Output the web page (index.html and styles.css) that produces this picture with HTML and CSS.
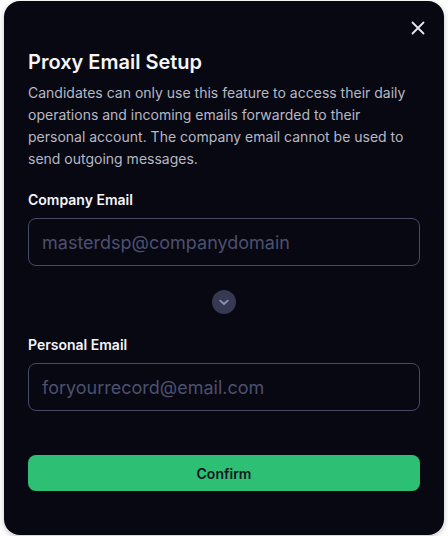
FILE: index.html
```html
<!DOCTYPE html>
<html lang="en">
<head>
  <meta charset="UTF-8" />
  <meta name="viewport" content="width=device-width, initial-scale=1.0"/>
  <title>Proxy Email Setup</title>
  <link rel="stylesheet" href="styles.css">
</head>
<body>
  <div class="modal">
    <button class="close-btn" aria-label="Close">
      <svg width="24" height="24" viewBox="0 0 24 24" fill="none" stroke="#e6e6ec" stroke-width="1.8" stroke-linecap="round">
        <path d="M6.5 6.5 L17.5 17.5 M17.5 6.5 L6.5 17.5"/>
      </svg>
    </button>

    <h1>Proxy Email Setup</h1>
    <p class="desc">Candidates can only use this feature to access their daily operations and incoming emails forwarded to their personal account. The company email cannot be used to send outgoing messages.</p>

    <div class="form-group">
      <label for="company-email">Company Email</label>
      <input type="text" id="company-email" placeholder="masterdsp@companydomain">
    </div>

    <div class="arrow-row">
      <span class="arrow">
        <svg width="24" height="24" viewBox="0 0 24 24" fill="none" stroke="#8e92bd" stroke-width="1.8" stroke-linecap="round" stroke-linejoin="round">
          <path d="M8.2 10.6 L12 14 L15.8 10.6"/>
        </svg>
      </span>
    </div>

    <div class="form-group">
      <label for="personal-email">Personal Email</label>
      <input type="text" id="personal-email" placeholder="foryourrecord@email.com">
    </div>

    <button class="confirm-btn">Confirm</button>
  </div>
</body>
</html>
```

FILE: styles.css
```css
body {
  font-family: 'Inter', 'Noto Sans', sans-serif;
  background-color: #fff;
  margin: 0;
  padding: 1px 4px;
}

.modal {
  position: relative;
  width: 440px;
  height: 534px;
  box-sizing: border-box;
  background-color: #070812;
  border-radius: 16px;
  padding: 47px 24px 44px;
  box-shadow: 0 2px 6px rgba(0, 0, 0, 0.22);
  display: flex;
  flex-direction: column;
}

.close-btn {
  position: absolute;
  top: 15px;
  right: 14px;
  width: 24px;
  height: 24px;
  padding: 0;
  border: none;
  background: none;
  cursor: pointer;
}

.close-btn svg {
  display: block;
}

h1 {
  margin: 0;
  font-size: 20px;
  line-height: 28px;
  font-weight: 600;
  color: #f5f5f7;
}

.desc {
  margin: 6px 0 0;
  font-size: 14px;
  line-height: 22px;
  color: #b7b8c3;
}

.form-group {
  display: flex;
  flex-direction: column;
  gap: 8px;
}

.desc + .form-group {
  margin-top: 20px;
}

label {
  font-size: 14px;
  line-height: 20px;
  font-weight: 600;
  color: #f5f5f7;
}

input[type="text"] {
  height: 48px;
  box-sizing: border-box;
  padding: 0 13px;
  background: transparent;
  border: 1px solid #474a66;
  border-radius: 8px;
  font-family: inherit;
  font-size: 18px;
  color: #e6e6ec;
  outline: none;
}

input::placeholder {
  color: #4d506e;
}

.arrow-row {
  display: flex;
  justify-content: center;
  margin: 24px 0 21px;
}

.arrow {
  width: 24px;
  height: 24px;
  border-radius: 50%;
  background-color: #373953;
}

.arrow svg {
  display: block;
}

.confirm-btn {
  margin-top: auto;
  height: 36px;
  border: none;
  border-radius: 8px;
  background-color: #2dbf74;
  color: #14151f;
  font-family: inherit;
  font-size: 14px;
  font-weight: 600;
  cursor: pointer;
}
```
